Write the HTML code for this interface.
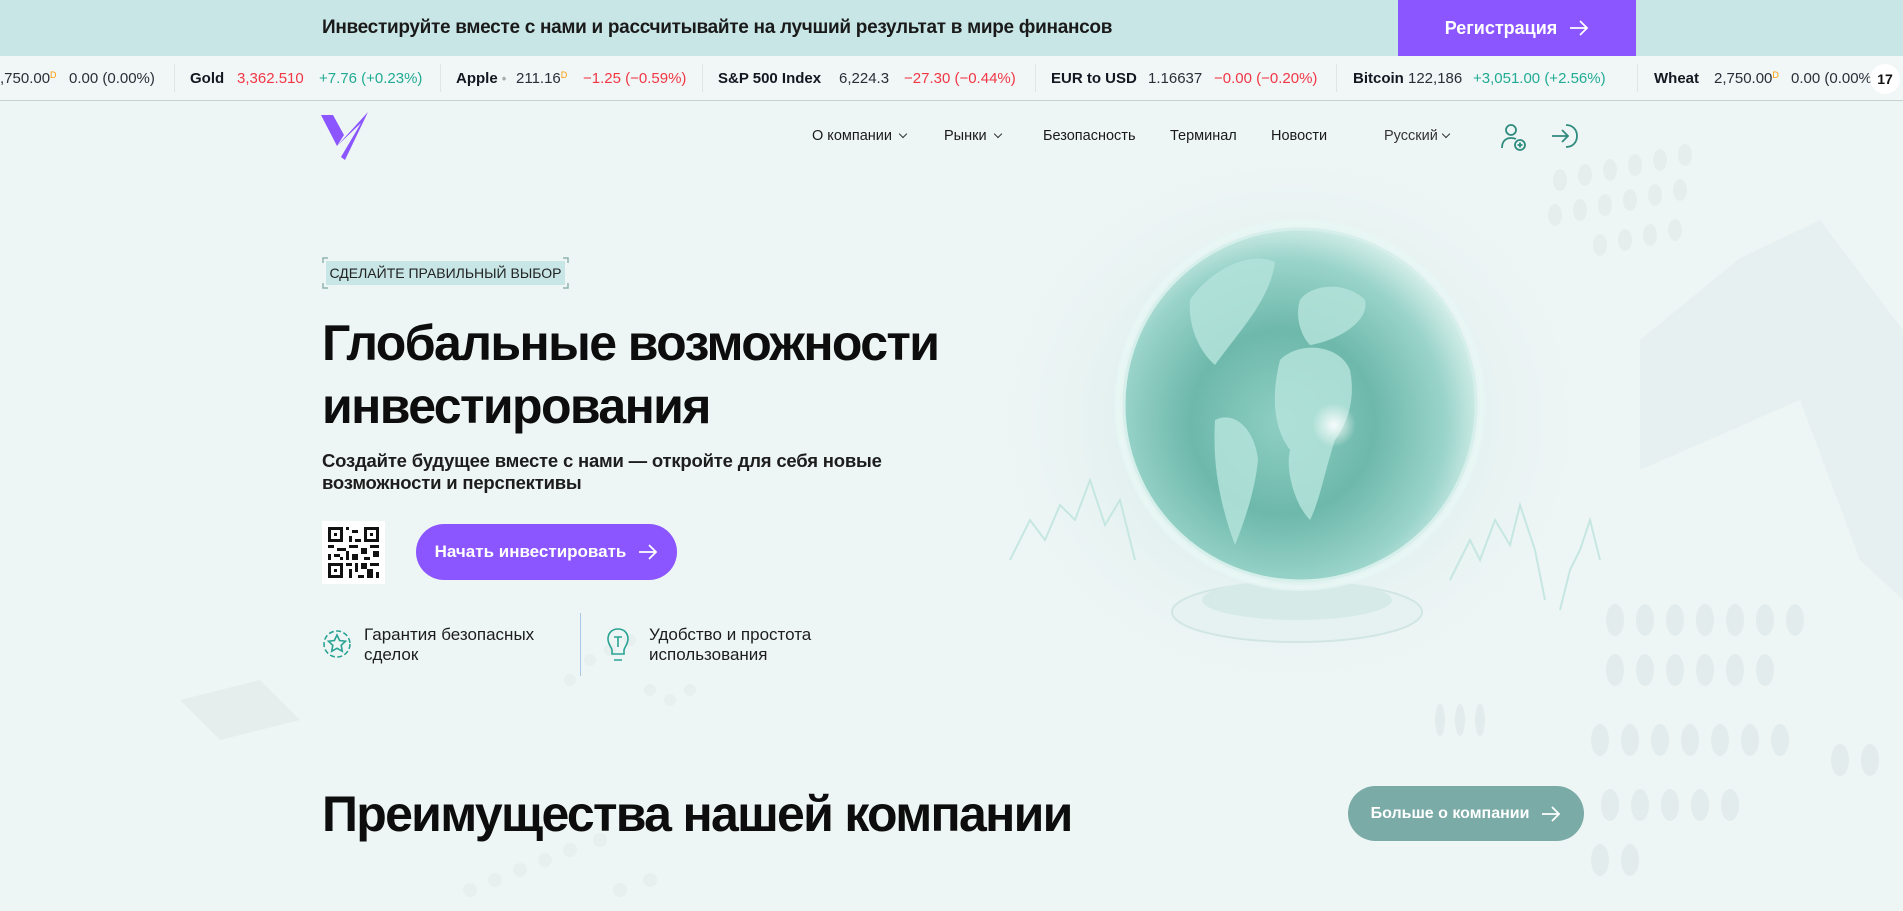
<!DOCTYPE html>
<html><head><meta charset="utf-8">
<style>
*{margin:0;padding:0;box-sizing:border-box}
body{width:1903px;height:911px;overflow:hidden;background:#eef6f5;font-family:"Liberation Sans","Noto Sans CJK SC",sans-serif;color:#111;position:relative}
.abs{position:absolute}
#top{left:0;top:0;width:1903px;height:56px;background:#c8e6e6}
#top .t{left:322px;top:17px;font-size:19px;font-weight:bold;color:#1a1a1a;letter-spacing:-0.3px}
#reg{left:1398px;top:0;width:238px;height:56px;background:#8b55ff;color:#fff;font-size:18px;font-weight:bold;display:flex;align-items:center;justify-content:center;gap:12px}
#tick{left:0;top:56px;width:1903px;height:45px;background:#f0f7f6;border-bottom:1px solid #c9d0d0;font-size:15px;white-space:nowrap}
#tick span{position:absolute;top:14px}
.b{font-weight:bold;color:#131722}
.n{color:#2a2e39}
.r{color:#f23645}
.g{color:#22ab94}
.sep{position:absolute;top:8px;width:1px;height:28px;background:#e0e6e6}
.d{color:#ff9800;font-size:9px;vertical-align:top}
nav span{position:absolute;top:128px;font-size:14.5px;color:#1a1a1a}
.chev{display:inline-block;width:6px;height:6px;border-right:1.4px solid #333;border-bottom:1.4px solid #333;transform:rotate(45deg);margin-left:8px;position:relative;top:-3px}
h1{position:absolute;left:322px;top:312px;font-size:50px;line-height:63px;font-weight:bold;letter-spacing:-1.6px;color:#0d0d0d}
.sub{left:322px;top:450px;font-size:18.5px;line-height:22px;font-weight:bold;color:#1d1d1d;letter-spacing:-0.2px}
.tag{left:322px;top:257px;width:247px;height:32px}
.tag .in{position:absolute;left:4px;top:4px;right:4px;bottom:4px;background:#c8e6e6;font-size:14px;color:#222;display:flex;align-items:center;justify-content:center}
#btn{left:416px;top:524px;width:261px;height:56px;border-radius:28px;background:#8b55ff;color:#fff;font-size:17px;font-weight:bold;display:flex;align-items:center;justify-content:center;gap:12px}
.ft{font-size:17px;line-height:20px;color:#1d1d1d}
h2{position:absolute;left:322px;top:784px;font-size:50px;font-weight:bold;letter-spacing:-1.7px;color:#0d0d0d;line-height:60px}
#more{left:1348px;top:786px;width:236px;height:55px;border-radius:28px;background:#7aaba6;color:#fff;font-size:16px;font-weight:bold;display:flex;align-items:center;justify-content:center;gap:12px}
</style></head><body>

<svg class="abs" style="left:0;top:0" width="1903" height="911">
<defs>
<radialGradient id="glow" cx="50%" cy="50%" r="50%"><stop offset="0" stop-color="#d3e7e5"/><stop offset=".55" stop-color="#e4f1f0"/><stop offset="1" stop-color="#eef6f5" stop-opacity="0"/></radialGradient>
<radialGradient id="gl" cx="45%" cy="55%" r="58%"><stop offset="0" stop-color="#8fcfc3"/><stop offset=".45" stop-color="#6db8ab"/><stop offset=".8" stop-color="#9ad4ca"/><stop offset="1" stop-color="#d9f0ec"/></radialGradient>
<radialGradient id="hl" cx="50%" cy="50%" r="50%"><stop offset="0" stop-color="#fff"/><stop offset="1" stop-color="#fff" stop-opacity="0"/></radialGradient>
</defs>
<g fill="#e2ebeb" opacity=".7">
<ellipse cx="1560" cy="180" rx="7" ry="11"/><ellipse cx="1585" cy="175" rx="7" ry="11"/><ellipse cx="1610" cy="170" rx="7" ry="11"/><ellipse cx="1635" cy="165" rx="7" ry="11"/><ellipse cx="1660" cy="160" rx="7" ry="11"/><ellipse cx="1685" cy="155" rx="7" ry="11"/>
<ellipse cx="1555" cy="215" rx="7" ry="11"/><ellipse cx="1580" cy="210" rx="7" ry="11"/><ellipse cx="1605" cy="205" rx="7" ry="11"/><ellipse cx="1630" cy="200" rx="7" ry="11"/><ellipse cx="1655" cy="195" rx="7" ry="11"/><ellipse cx="1680" cy="190" rx="7" ry="11"/>
<ellipse cx="1600" cy="245" rx="7" ry="11"/><ellipse cx="1625" cy="240" rx="7" ry="11"/><ellipse cx="1650" cy="235" rx="7" ry="11"/><ellipse cx="1675" cy="230" rx="7" ry="11"/>
</g>
<polygon points="1740,258 1820,220 1903,330 1903,600 1860,560 1800,400 1640,470 1640,340" fill="#e6efef" opacity=".9"/>
<g fill="#e3ecec">
<ellipse cx="1615" cy="620" rx="9" ry="16"/><ellipse cx="1645" cy="620" rx="9" ry="16"/><ellipse cx="1675" cy="620" rx="9" ry="16"/><ellipse cx="1705" cy="620" rx="9" ry="16"/><ellipse cx="1735" cy="620" rx="9" ry="16"/><ellipse cx="1765" cy="620" rx="9" ry="16"/><ellipse cx="1795" cy="620" rx="9" ry="16"/>
<ellipse cx="1615" cy="670" rx="9" ry="16"/><ellipse cx="1645" cy="670" rx="9" ry="16"/><ellipse cx="1675" cy="670" rx="9" ry="16"/><ellipse cx="1705" cy="670" rx="9" ry="16"/><ellipse cx="1735" cy="670" rx="9" ry="16"/><ellipse cx="1765" cy="670" rx="9" ry="16"/>
<ellipse cx="1600" cy="740" rx="9" ry="16"/><ellipse cx="1630" cy="740" rx="9" ry="16"/><ellipse cx="1660" cy="740" rx="9" ry="16"/><ellipse cx="1690" cy="740" rx="9" ry="16"/><ellipse cx="1720" cy="740" rx="9" ry="16"/><ellipse cx="1750" cy="740" rx="9" ry="16"/><ellipse cx="1780" cy="740" rx="9" ry="16"/><ellipse cx="1840" cy="760" rx="9" ry="16"/><ellipse cx="1870" cy="760" rx="9" ry="16"/>
<ellipse cx="1610" cy="805" rx="9" ry="16"/><ellipse cx="1640" cy="805" rx="9" ry="16"/><ellipse cx="1670" cy="805" rx="9" ry="16"/><ellipse cx="1700" cy="805" rx="9" ry="16"/><ellipse cx="1730" cy="805" rx="9" ry="16"/><ellipse cx="1600" cy="860" rx="9" ry="16"/><ellipse cx="1630" cy="860" rx="9" ry="16"/>
<ellipse cx="1440" cy="720" rx="5" ry="16"/><ellipse cx="1460" cy="720" rx="5" ry="16"/><ellipse cx="1480" cy="720" rx="5" ry="16"/>
</g>
<g fill="#e7efef">
<circle cx="520" cy="870" r="7"/><circle cx="545" cy="860" r="7"/><circle cx="570" cy="850" r="7"/><circle cx="495" cy="880" r="7"/><circle cx="470" cy="890" r="7"/><circle cx="600" cy="840" r="7"/><circle cx="620" cy="890" r="7"/><circle cx="650" cy="880" r="7"/>
<circle cx="590" cy="660" r="6"/><circle cx="610" cy="650" r="6"/><circle cx="630" cy="640" r="6"/><circle cx="570" cy="680" r="6"/><circle cx="650" cy="690" r="6"/><circle cx="670" cy="700" r="6"/><circle cx="690" cy="690" r="6"/>
</g>
<polygon points="180,700 260,680 300,720 220,740" fill="#e5eded"/>
<ellipse cx="1290" cy="420" rx="330" ry="300" fill="url(#glow)"/>
<g stroke="#c2e6df" stroke-width="2" fill="none" opacity=".9">
<polyline points="1010,560 1030,520 1045,540 1060,505 1075,520 1090,480 1105,525 1120,500 1135,560"/>
<polyline points="1450,580 1470,540 1480,560 1495,520 1510,545 1520,505 1535,550 1545,600"/>
<polyline points="1560,610 1570,570 1580,550 1590,520 1600,560"/>
</g>
<ellipse cx="1297" cy="612" rx="125" ry="30" fill="#e6f2f1" stroke="#d1e6e3" stroke-width="2"/>
<ellipse cx="1297" cy="600" rx="95" ry="20" fill="#d6ebe8"/>
<circle cx="1300" cy="405" r="186" fill="#e7f5f3" opacity=".7"/>
<circle cx="1300" cy="405" r="176" fill="url(#gl)" stroke="#d6efeb" stroke-width="3"/>
<g fill="#b4e3da" opacity=".85">
<path d="M1280,360 C1300,340 1340,345 1350,370 C1355,395 1350,420 1335,440 C1325,470 1320,500 1310,520 C1295,505 1285,470 1290,450 C1275,430 1270,400 1280,360Z"/>
<path d="M1300,300 C1310,285 1345,280 1365,300 C1370,320 1340,340 1310,345 C1300,335 1295,315 1300,300Z"/>
<path d="M1190,300 C1210,270 1250,250 1275,262 C1270,300 1240,330 1215,365 C1198,350 1188,325 1190,300Z"/>
<path d="M1215,420 C1235,410 1255,430 1258,460 C1255,490 1245,520 1235,545 C1222,510 1212,470 1215,420Z"/>
</g>
<circle cx="1334" cy="425" r="22" fill="url(#hl)" opacity=".9"/>
<circle cx="1300" cy="405" r="182" fill="none" stroke="#e9f6f4" stroke-width="4" opacity=".8"/>
</svg>

<div id="top" class="abs"><div class="abs t">Инвестируйте вместе с нами и рассчитывайте на лучший результат в мире финансов</div>
<div id="reg" class="abs">Регистрация <svg width="20" height="16" viewBox="0 0 20 16"><path d="M1 8H18M11 1L18 8L11 15" stroke="#fff" stroke-width="1.8" fill="none"/></svg></div></div>

<div id="tick" class="abs">
<span class="n" style="left:0">,750.00<sup class="d">D</sup></span><span class="n" style="left:69px">0.00 (0.00%)</span>
<i class="sep" style="left:174px"></i>
<span class="b" style="left:190px">Gold</span><span class="r" style="left:237px">3,362.510</span><span class="g" style="left:319px">+7.76 (+0.23%)</span>
<i class="sep" style="left:440px"></i>
<span class="b" style="left:456px">Apple <small style="color:#aaa">•</small></span><span class="n" style="left:516px">211.16<sup class="d">D</sup></span><span class="r" style="left:583px">−1.25 (−0.59%)</span>
<i class="sep" style="left:702px"></i>
<span class="b" style="left:718px">S&amp;P 500 Index</span><span class="n" style="left:839px">6,224.3</span><span class="r" style="left:904px">−27.30 (−0.44%)</span>
<i class="sep" style="left:1035px"></i>
<span class="b" style="left:1051px">EUR to USD</span><span class="n" style="left:1148px">1.16637</span><span class="r" style="left:1214px">−0.00 (−0.20%)</span>
<i class="sep" style="left:1336px"></i>
<span class="b" style="left:1353px">Bitcoin</span><span class="n" style="left:1408px">122,186</span><span class="g" style="left:1473px">+3,051.00 (+2.56%)</span>
<i class="sep" style="left:1637px"></i>
<span class="b" style="left:1654px">Wheat</span><span class="n" style="left:1714px">2,750.00<sup class="d">D</sup></span><span class="n" style="left:1791px">0.00 (0.00%)</span>
<div class="abs" style="left:1870px;top:8px;width:30px;height:30px;border-radius:15px;background:#fff;font-weight:bold;font-size:14px;display:flex;align-items:center;justify-content:center;color:#111">17</div>
</div>

<svg class="abs" style="left:318px;top:110px" width="54" height="54" viewBox="318 110 54 54">
<polygon points="321,115 333,115 344,135 337,146" fill="#8b55ff"/>
<polygon points="337,146 368,112 345,160 341,157 361,123" fill="#8b55ff"/>
</svg>

<nav>
<span style="left:812px">О компании<i class="chev"></i></span>
<span style="left:944px">Рынки<i class="chev"></i></span>
<span style="left:1043px">Безопасность</span>
<span style="left:1170px">Терминал</span>
<span style="left:1271px">Новости</span>
<span style="left:1384px;color:#333">Русский<i class="chev" style="margin-left:5px"></i></span>
</nav>
<svg class="abs" style="left:1500px;top:122px" width="30" height="30" viewBox="0 0 30 30" fill="none" stroke="#2e8b7e" stroke-width="1.8">
<circle cx="11" cy="8" r="5"/><path d="M2 26C2 19 6 16 11 16C13 16 15 16.5 16 17"/><circle cx="20" cy="23" r="5"/><path d="M20 20.5V25.5M17.5 23H22.5"/></svg>
<svg class="abs" style="left:1550px;top:122px" width="30" height="30" viewBox="0 0 30 30" fill="none" stroke="#2e8b7e" stroke-width="1.8">
<path d="M2 14H18M12 8L18 14L12 20"/><path d="M16 3C23 3 27 8 27 14C27 20 23 25 16 25"/></svg>

<div class="abs tag">
<svg class="abs" style="left:0;top:0" width="247" height="32" fill="none" stroke="#8fb3b0" stroke-width="1.5"><path d="M1 6V1H6M241 1H246V6M1 26V31H6M241 31H246V26"/></svg>
<div class="in">СДЕЛАЙТЕ ПРАВИЛЬНЫЙ ВЫБОР</div></div>

<h1>Глобальные возможности<br>инвестирования</h1>
<div class="abs sub">Создайте будущее вместе с нами — откройте для себя новые<br>возможности и перспективы</div>

<svg class="abs" style="left:322px;top:521px" width="63" height="63" viewBox="0 0 21 21">
<rect width="21" height="21" fill="#fff"/>
<g fill="#111"><path d="M2 2h5v5H2zM14 2h5v5h-5zM2 14h5v5H2z"/></g>
<g fill="#fff"><path d="M3 3h3v3H3zM15 3h3v3h-3zM3 15h3v3H3z"/></g>
<g fill="#111"><path d="M4 4h1v1H4zM16 4h1v1h-1zM4 16h1v1H4z"/>
<path d="M8 2h1v1H8zM10 3h2v1h-2zM9 5h1v2H9zM11 6h2v1h-2zM2 8h2v1H2zM5 9h3v1H5zM9 8h3v1H9zM13 9h2v2h-2zM16 8h3v1h-3zM17 10h2v2h-2zM2 11h1v2H2zM4 11h2v1H4zM8 10h1v3H8zM10 11h2v2h-2zM14 12h2v1h-2zM8 14h2v1H8zM11 14h1v3h-1zM9 16h1v3H9zM13 14h2v2h-2zM16 14h3v1h-3zM15 16h2v3h-2zM18 17h1v2h-1zM12 18h2v1h-2zM6 12h1v1H6z"/></g>
</svg>
<div id="btn" class="abs">Начать инвестировать <svg width="20" height="16" viewBox="0 0 20 16"><path d="M1 8H18M11 1L18 8L11 15" stroke="#fff" stroke-width="1.8" fill="none"/></svg></div>

<svg class="abs" style="left:320px;top:627px" width="34" height="34" viewBox="0 0 34 34" fill="none" stroke="#2aa394" stroke-width="1.6">
<circle cx="17" cy="17" r="13" stroke-dasharray="5 2.5"/><path d="M17 8L19.6 13.5L25.5 14.2L21.2 18.3L22.3 24.2L17 21.3L11.7 24.2L12.8 18.3L8.5 14.2L14.4 13.5Z"/></svg>
<div class="abs ft" style="left:364px;top:625px">Гарантия безопасных<br>сделок</div>
<div class="abs" style="left:580px;top:613px;width:1px;height:63px;background:#a9c8e6"></div>
<svg class="abs" style="left:606px;top:627px" width="24" height="36" viewBox="0 0 24 36" fill="none" stroke="#2aa394" stroke-width="1.6">
<path d="M12 2C6 2 2 6 2 12C2 17 5 19 6 23V27H18V23C19 19 22 17 22 12C22 6 18 2 12 2Z"/><path d="M8 10H16M12 10V20M8 33H16"/></svg>
<div class="abs ft" style="left:649px;top:625px">Удобство и простота<br>использования</div>

<h2>Преимущества нашей компании</h2>
<div id="more" class="abs">Больше о компании <svg width="20" height="16" viewBox="0 0 20 16"><path d="M1 8H18M11 1L18 8L11 15" stroke="#fff" stroke-width="1.8" fill="none"/></svg></div>
</body></html>
